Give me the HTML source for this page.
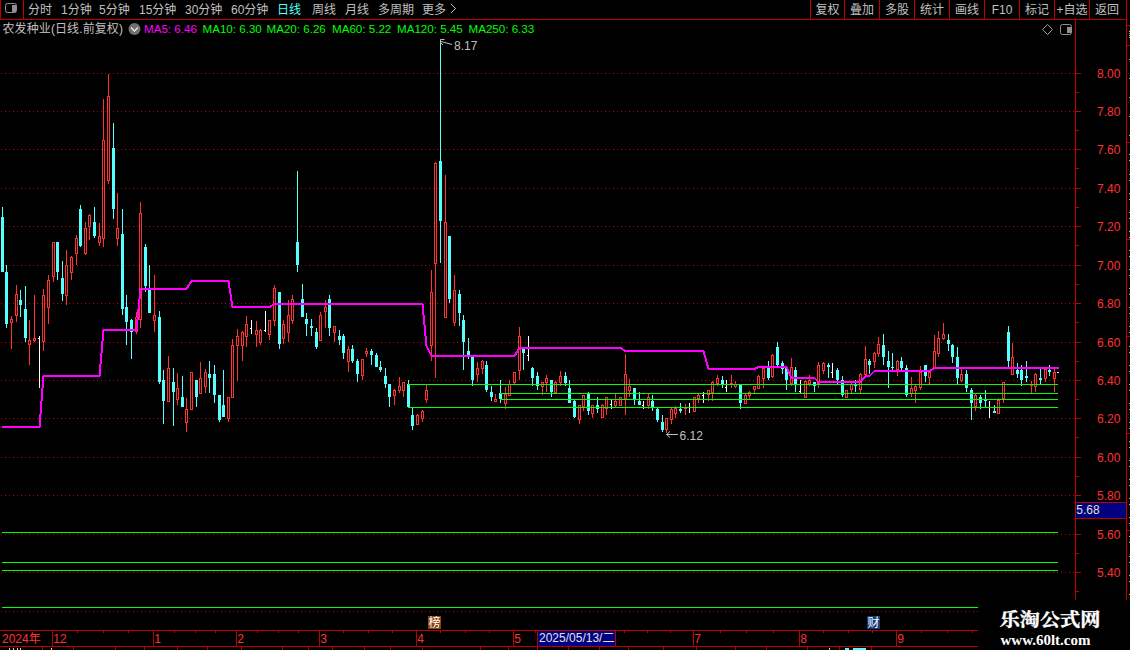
<!DOCTYPE html>
<html lang="zh-CN"><head><meta charset="utf-8"><title>农发种业 日线</title>
<style>
html,body{margin:0;padding:0;background:#000;width:1130px;height:650px;overflow:hidden}
svg{display:block;font-family:'Liberation Sans','Noto Sans CJK SC',sans-serif}
</style></head><body>
<svg width="1130" height="650" viewBox="0 0 1130 650" shape-rendering="crispEdges">
<rect width="1130" height="650" fill="#000"/>
<g id="grid">
<line x1="1" y1="73.5" x2="1074" y2="73.5" stroke="#c80000" stroke-width="1" stroke-dasharray="1 3"/>
<line x1="1" y1="111.5" x2="1074" y2="111.5" stroke="#c80000" stroke-width="1" stroke-dasharray="1 3"/>
<line x1="1" y1="149.5" x2="1074" y2="149.5" stroke="#c80000" stroke-width="1" stroke-dasharray="1 3"/>
<line x1="1" y1="188.5" x2="1074" y2="188.5" stroke="#c80000" stroke-width="1" stroke-dasharray="1 3"/>
<line x1="1" y1="226.5" x2="1074" y2="226.5" stroke="#c80000" stroke-width="1" stroke-dasharray="1 3"/>
<line x1="1" y1="265.5" x2="1074" y2="265.5" stroke="#c80000" stroke-width="1" stroke-dasharray="1 3"/>
<line x1="1" y1="303.5" x2="1074" y2="303.5" stroke="#c80000" stroke-width="1" stroke-dasharray="1 3"/>
<line x1="1" y1="342.5" x2="1074" y2="342.5" stroke="#c80000" stroke-width="1" stroke-dasharray="1 3"/>
<line x1="1" y1="380.5" x2="1074" y2="380.5" stroke="#c80000" stroke-width="1" stroke-dasharray="1 3"/>
<line x1="1" y1="418.5" x2="1074" y2="418.5" stroke="#c80000" stroke-width="1" stroke-dasharray="1 3"/>
<line x1="1" y1="457.5" x2="1074" y2="457.5" stroke="#c80000" stroke-width="1" stroke-dasharray="1 3"/>
<line x1="1" y1="495.5" x2="1074" y2="495.5" stroke="#c80000" stroke-width="1" stroke-dasharray="1 3"/>
<line x1="1" y1="534.5" x2="1074" y2="534.5" stroke="#c80000" stroke-width="1" stroke-dasharray="1 3"/>
<line x1="1" y1="572.5" x2="1074" y2="572.5" stroke="#c80000" stroke-width="1" stroke-dasharray="1 3"/>
<line x1="1" y1="611.5" x2="1074" y2="611.5" stroke="#c80000" stroke-width="1" stroke-dasharray="1 3"/>
</g>
<g id="candles">
<rect x="2" y="207" width="1" height="65" fill="#54ffff"/>
<rect x="1" y="217" width="3" height="55" fill="#54ffff"/>
<rect x="6" y="265" width="1" height="63" fill="#54ffff"/>
<rect x="5" y="272" width="3" height="52" fill="#54ffff"/>
<rect x="11" y="316" width="1" height="3" fill="#ff3232"/>
<rect x="11" y="323" width="1" height="26" fill="#ff3232"/>
<rect x="10" y="319" width="3" height="4" fill="#ff3232"/>
<rect x="11" y="320" width="1" height="2" fill="#000"/>
<rect x="16" y="285" width="1" height="9" fill="#ff3232"/>
<rect x="16" y="316" width="1" height="6" fill="#ff3232"/>
<rect x="15" y="294" width="3" height="22" fill="#ff3232"/>
<rect x="16" y="295" width="1" height="20" fill="#000"/>
<rect x="20" y="290" width="1" height="27" fill="#54ffff"/>
<rect x="19" y="300" width="3" height="5" fill="#54ffff"/>
<rect x="25" y="286" width="1" height="56" fill="#54ffff"/>
<rect x="24" y="309" width="3" height="29" fill="#54ffff"/>
<rect x="29" y="320" width="1" height="20" fill="#ff3232"/>
<rect x="29" y="345" width="1" height="20" fill="#ff3232"/>
<rect x="28" y="340" width="3" height="5" fill="#ff3232"/>
<rect x="29" y="341" width="1" height="3" fill="#000"/>
<rect x="34" y="295" width="1" height="43" fill="#ff3232"/>
<rect x="34" y="341" width="1" height="1" fill="#ff3232"/>
<rect x="33" y="338" width="3" height="3" fill="#ff3232"/>
<rect x="34" y="339" width="1" height="1" fill="#000"/>
<rect x="39" y="336" width="1" height="52" fill="#ffffff"/>
<rect x="38" y="338" width="1" height="1" fill="#ffffff"/>
<rect x="43" y="289" width="1" height="6" fill="#ff3232"/>
<rect x="43" y="342" width="1" height="9" fill="#ff3232"/>
<rect x="42" y="295" width="3" height="47" fill="#ff3232"/>
<rect x="43" y="296" width="1" height="45" fill="#000"/>
<rect x="48" y="275" width="1" height="5" fill="#ff3232"/>
<rect x="48" y="308" width="1" height="16" fill="#ff3232"/>
<rect x="47" y="280" width="3" height="28" fill="#ff3232"/>
<rect x="48" y="281" width="1" height="26" fill="#000"/>
<rect x="53" y="277" width="1" height="5" fill="#ff3232"/>
<rect x="52" y="242" width="3" height="35" fill="#ff3232"/>
<rect x="53" y="243" width="1" height="33" fill="#000"/>
<rect x="57" y="242" width="1" height="38" fill="#54ffff"/>
<rect x="56" y="242" width="3" height="30" fill="#54ffff"/>
<rect x="62" y="261" width="1" height="40" fill="#54ffff"/>
<rect x="61" y="278" width="3" height="16" fill="#54ffff"/>
<rect x="66" y="250" width="1" height="15" fill="#ff3232"/>
<rect x="66" y="296" width="1" height="9" fill="#ff3232"/>
<rect x="65" y="265" width="3" height="31" fill="#ff3232"/>
<rect x="66" y="266" width="1" height="29" fill="#000"/>
<rect x="71" y="256" width="1" height="1" fill="#ff3232"/>
<rect x="71" y="273" width="1" height="7" fill="#ff3232"/>
<rect x="70" y="257" width="3" height="16" fill="#ff3232"/>
<rect x="71" y="258" width="1" height="14" fill="#000"/>
<rect x="76" y="235" width="1" height="3" fill="#ff3232"/>
<rect x="76" y="254" width="1" height="11" fill="#ff3232"/>
<rect x="75" y="238" width="3" height="16" fill="#ff3232"/>
<rect x="76" y="239" width="1" height="14" fill="#000"/>
<rect x="80" y="205" width="1" height="42" fill="#54ffff"/>
<rect x="79" y="209" width="3" height="37" fill="#54ffff"/>
<rect x="85" y="222" width="1" height="6" fill="#ff3232"/>
<rect x="85" y="254" width="1" height="1" fill="#ff3232"/>
<rect x="84" y="228" width="3" height="26" fill="#ff3232"/>
<rect x="85" y="229" width="1" height="24" fill="#000"/>
<rect x="89" y="214" width="1" height="1" fill="#ff3232"/>
<rect x="89" y="227" width="1" height="13" fill="#ff3232"/>
<rect x="88" y="215" width="3" height="12" fill="#ff3232"/>
<rect x="89" y="216" width="1" height="10" fill="#000"/>
<rect x="94" y="207" width="1" height="31" fill="#54ffff"/>
<rect x="93" y="222" width="3" height="14" fill="#54ffff"/>
<rect x="99" y="223" width="1" height="13" fill="#ff3232"/>
<rect x="99" y="243" width="1" height="3" fill="#ff3232"/>
<rect x="98" y="236" width="3" height="7" fill="#ff3232"/>
<rect x="99" y="237" width="1" height="5" fill="#000"/>
<rect x="103" y="99" width="1" height="41" fill="#ff3232"/>
<rect x="103" y="239" width="1" height="8" fill="#ff3232"/>
<rect x="102" y="140" width="3" height="99" fill="#ff3232"/>
<rect x="103" y="141" width="1" height="97" fill="#000"/>
<rect x="108" y="74" width="1" height="22" fill="#ff3232"/>
<rect x="108" y="181" width="1" height="3" fill="#ff3232"/>
<rect x="107" y="96" width="3" height="85" fill="#ff3232"/>
<rect x="108" y="97" width="1" height="83" fill="#000"/>
<rect x="113" y="123" width="1" height="96" fill="#54ffff"/>
<rect x="112" y="148" width="3" height="61" fill="#54ffff"/>
<rect x="117" y="193" width="1" height="35" fill="#ff3232"/>
<rect x="117" y="239" width="1" height="7" fill="#ff3232"/>
<rect x="116" y="228" width="3" height="11" fill="#ff3232"/>
<rect x="117" y="229" width="1" height="9" fill="#000"/>
<rect x="122" y="209" width="1" height="106" fill="#54ffff"/>
<rect x="121" y="234" width="3" height="75" fill="#54ffff"/>
<rect x="126" y="295" width="1" height="50" fill="#54ffff"/>
<rect x="125" y="307" width="3" height="15" fill="#54ffff"/>
<rect x="131" y="319" width="1" height="40" fill="#54ffff"/>
<rect x="130" y="320" width="3" height="12" fill="#54ffff"/>
<rect x="136" y="312" width="1" height="5" fill="#ff3232"/>
<rect x="136" y="332" width="1" height="2" fill="#ff3232"/>
<rect x="135" y="317" width="3" height="15" fill="#ff3232"/>
<rect x="136" y="318" width="1" height="13" fill="#000"/>
<rect x="140" y="202" width="1" height="11" fill="#ff3232"/>
<rect x="140" y="320" width="1" height="8" fill="#ff3232"/>
<rect x="139" y="213" width="3" height="107" fill="#ff3232"/>
<rect x="140" y="214" width="1" height="105" fill="#000"/>
<rect x="145" y="244" width="1" height="48" fill="#54ffff"/>
<rect x="144" y="247" width="3" height="39" fill="#54ffff"/>
<rect x="149" y="265" width="1" height="48" fill="#54ffff"/>
<rect x="148" y="289" width="3" height="24" fill="#54ffff"/>
<rect x="154" y="275" width="1" height="40" fill="#ff3232"/>
<rect x="154" y="321" width="1" height="11" fill="#ff3232"/>
<rect x="153" y="315" width="3" height="6" fill="#ff3232"/>
<rect x="154" y="316" width="1" height="4" fill="#000"/>
<rect x="159" y="311" width="1" height="73" fill="#54ffff"/>
<rect x="158" y="317" width="3" height="65" fill="#54ffff"/>
<rect x="163" y="370" width="1" height="54" fill="#54ffff"/>
<rect x="162" y="380" width="3" height="21" fill="#54ffff"/>
<rect x="168" y="356" width="1" height="12" fill="#ff3232"/>
<rect x="167" y="368" width="3" height="34" fill="#ff3232"/>
<rect x="168" y="369" width="1" height="32" fill="#000"/>
<rect x="173" y="368" width="1" height="58" fill="#54ffff"/>
<rect x="172" y="382" width="3" height="10" fill="#54ffff"/>
<rect x="177" y="373" width="1" height="15" fill="#ff3232"/>
<rect x="177" y="400" width="1" height="5" fill="#ff3232"/>
<rect x="176" y="388" width="3" height="12" fill="#ff3232"/>
<rect x="177" y="389" width="1" height="10" fill="#000"/>
<rect x="182" y="376" width="1" height="31" fill="#54ffff"/>
<rect x="181" y="397" width="3" height="10" fill="#54ffff"/>
<rect x="186" y="398" width="1" height="11" fill="#ff3232"/>
<rect x="186" y="423" width="1" height="9" fill="#ff3232"/>
<rect x="185" y="409" width="3" height="14" fill="#ff3232"/>
<rect x="186" y="410" width="1" height="12" fill="#000"/>
<rect x="190" y="372" width="3" height="38" fill="#ff3232"/>
<rect x="191" y="373" width="1" height="36" fill="#000"/>
<rect x="196" y="380" width="1" height="27" fill="#54ffff"/>
<rect x="195" y="380" width="3" height="17" fill="#54ffff"/>
<rect x="200" y="362" width="1" height="16" fill="#ff3232"/>
<rect x="199" y="378" width="3" height="16" fill="#ff3232"/>
<rect x="200" y="379" width="1" height="14" fill="#000"/>
<rect x="205" y="369" width="1" height="3" fill="#ff3232"/>
<rect x="205" y="387" width="1" height="6" fill="#ff3232"/>
<rect x="204" y="372" width="3" height="15" fill="#ff3232"/>
<rect x="205" y="373" width="1" height="13" fill="#000"/>
<rect x="209" y="361" width="1" height="32" fill="#54ffff"/>
<rect x="208" y="374" width="3" height="4" fill="#54ffff"/>
<rect x="214" y="365" width="1" height="38" fill="#54ffff"/>
<rect x="213" y="374" width="3" height="21" fill="#54ffff"/>
<rect x="219" y="395" width="1" height="27" fill="#54ffff"/>
<rect x="218" y="395" width="3" height="25" fill="#54ffff"/>
<rect x="223" y="370" width="1" height="47" fill="#54ffff"/>
<rect x="222" y="405" width="3" height="12" fill="#54ffff"/>
<rect x="228" y="419" width="1" height="3" fill="#ff3232"/>
<rect x="227" y="397" width="3" height="22" fill="#ff3232"/>
<rect x="228" y="398" width="1" height="20" fill="#000"/>
<rect x="232" y="339" width="1" height="6" fill="#ff3232"/>
<rect x="231" y="345" width="3" height="53" fill="#ff3232"/>
<rect x="232" y="346" width="1" height="51" fill="#000"/>
<rect x="237" y="329" width="1" height="7" fill="#ff3232"/>
<rect x="237" y="346" width="1" height="35" fill="#ff3232"/>
<rect x="236" y="336" width="3" height="10" fill="#ff3232"/>
<rect x="237" y="337" width="1" height="8" fill="#000"/>
<rect x="242" y="331" width="1" height="1" fill="#ff3232"/>
<rect x="242" y="346" width="1" height="15" fill="#ff3232"/>
<rect x="241" y="332" width="3" height="14" fill="#ff3232"/>
<rect x="242" y="333" width="1" height="12" fill="#000"/>
<rect x="246" y="316" width="1" height="8" fill="#ff3232"/>
<rect x="246" y="337" width="1" height="10" fill="#ff3232"/>
<rect x="245" y="324" width="3" height="13" fill="#ff3232"/>
<rect x="246" y="325" width="1" height="11" fill="#000"/>
<rect x="251" y="320" width="1" height="14" fill="#ffffff"/>
<rect x="250" y="328" width="1" height="1" fill="#ffffff"/>
<rect x="256" y="321" width="1" height="9" fill="#ff3232"/>
<rect x="256" y="335" width="1" height="12" fill="#ff3232"/>
<rect x="255" y="330" width="3" height="5" fill="#ff3232"/>
<rect x="256" y="331" width="1" height="3" fill="#000"/>
<rect x="260" y="329" width="1" height="1" fill="#ff3232"/>
<rect x="260" y="343" width="1" height="2" fill="#ff3232"/>
<rect x="259" y="330" width="3" height="13" fill="#ff3232"/>
<rect x="260" y="331" width="1" height="11" fill="#000"/>
<rect x="265" y="311" width="1" height="21" fill="#ffffff"/>
<rect x="264" y="330" width="1" height="1" fill="#ffffff"/>
<rect x="269" y="335" width="1" height="5" fill="#ff3232"/>
<rect x="268" y="320" width="3" height="15" fill="#ff3232"/>
<rect x="269" y="321" width="1" height="13" fill="#000"/>
<rect x="274" y="285" width="1" height="3" fill="#ff3232"/>
<rect x="274" y="321" width="1" height="5" fill="#ff3232"/>
<rect x="273" y="288" width="3" height="33" fill="#ff3232"/>
<rect x="274" y="289" width="1" height="31" fill="#000"/>
<rect x="279" y="292" width="1" height="57" fill="#54ffff"/>
<rect x="278" y="292" width="3" height="52" fill="#54ffff"/>
<rect x="283" y="320" width="1" height="4" fill="#ff3232"/>
<rect x="283" y="339" width="1" height="5" fill="#ff3232"/>
<rect x="282" y="324" width="3" height="15" fill="#ff3232"/>
<rect x="283" y="325" width="1" height="13" fill="#000"/>
<rect x="288" y="300" width="1" height="15" fill="#ff3232"/>
<rect x="288" y="333" width="1" height="9" fill="#ff3232"/>
<rect x="287" y="315" width="3" height="18" fill="#ff3232"/>
<rect x="288" y="316" width="1" height="16" fill="#000"/>
<rect x="292" y="295" width="1" height="4" fill="#ff3232"/>
<rect x="292" y="321" width="1" height="3" fill="#ff3232"/>
<rect x="291" y="299" width="3" height="22" fill="#ff3232"/>
<rect x="292" y="300" width="1" height="20" fill="#000"/>
<rect x="297" y="171" width="1" height="101" fill="#54ffff"/>
<rect x="296" y="242" width="3" height="23" fill="#54ffff"/>
<rect x="302" y="284" width="1" height="33" fill="#54ffff"/>
<rect x="301" y="299" width="3" height="18" fill="#54ffff"/>
<rect x="306" y="313" width="1" height="23" fill="#54ffff"/>
<rect x="305" y="319" width="3" height="5" fill="#54ffff"/>
<rect x="311" y="319" width="1" height="17" fill="#54ffff"/>
<rect x="310" y="326" width="3" height="2" fill="#54ffff"/>
<rect x="316" y="328" width="1" height="21" fill="#54ffff"/>
<rect x="315" y="332" width="3" height="15" fill="#54ffff"/>
<rect x="320" y="312" width="1" height="3" fill="#ff3232"/>
<rect x="319" y="315" width="3" height="26" fill="#ff3232"/>
<rect x="320" y="316" width="1" height="24" fill="#000"/>
<rect x="325" y="300" width="1" height="7" fill="#ff3232"/>
<rect x="325" y="312" width="1" height="16" fill="#ff3232"/>
<rect x="324" y="307" width="3" height="5" fill="#ff3232"/>
<rect x="325" y="308" width="1" height="3" fill="#000"/>
<rect x="329" y="295" width="1" height="41" fill="#54ffff"/>
<rect x="328" y="299" width="3" height="29" fill="#54ffff"/>
<rect x="334" y="333" width="1" height="9" fill="#ff3232"/>
<rect x="333" y="326" width="3" height="7" fill="#ff3232"/>
<rect x="334" y="327" width="1" height="5" fill="#000"/>
<rect x="339" y="330" width="1" height="15" fill="#54ffff"/>
<rect x="338" y="336" width="3" height="4" fill="#54ffff"/>
<rect x="343" y="334" width="1" height="25" fill="#54ffff"/>
<rect x="342" y="336" width="3" height="17" fill="#54ffff"/>
<rect x="348" y="346" width="1" height="3" fill="#ff3232"/>
<rect x="348" y="362" width="1" height="10" fill="#ff3232"/>
<rect x="347" y="349" width="3" height="13" fill="#ff3232"/>
<rect x="348" y="350" width="1" height="11" fill="#000"/>
<rect x="352" y="345" width="1" height="18" fill="#54ffff"/>
<rect x="351" y="349" width="3" height="12" fill="#54ffff"/>
<rect x="357" y="359" width="1" height="23" fill="#54ffff"/>
<rect x="356" y="361" width="3" height="13" fill="#54ffff"/>
<rect x="362" y="376" width="1" height="4" fill="#ff3232"/>
<rect x="361" y="359" width="3" height="17" fill="#ff3232"/>
<rect x="362" y="360" width="1" height="15" fill="#000"/>
<rect x="366" y="348" width="1" height="3" fill="#ff3232"/>
<rect x="366" y="354" width="1" height="3" fill="#ff3232"/>
<rect x="365" y="351" width="3" height="3" fill="#ff3232"/>
<rect x="366" y="352" width="1" height="1" fill="#000"/>
<rect x="371" y="349" width="1" height="16" fill="#54ffff"/>
<rect x="370" y="351" width="3" height="4" fill="#54ffff"/>
<rect x="376" y="353" width="1" height="14" fill="#54ffff"/>
<rect x="375" y="355" width="3" height="12" fill="#54ffff"/>
<rect x="380" y="361" width="1" height="11" fill="#54ffff"/>
<rect x="379" y="367" width="3" height="3" fill="#54ffff"/>
<rect x="385" y="368" width="1" height="20" fill="#54ffff"/>
<rect x="384" y="376" width="3" height="8" fill="#54ffff"/>
<rect x="389" y="384" width="1" height="23" fill="#54ffff"/>
<rect x="388" y="384" width="3" height="13" fill="#54ffff"/>
<rect x="394" y="389" width="1" height="1" fill="#ff3232"/>
<rect x="394" y="396" width="1" height="9" fill="#ff3232"/>
<rect x="393" y="390" width="3" height="6" fill="#ff3232"/>
<rect x="394" y="391" width="1" height="4" fill="#000"/>
<rect x="399" y="377" width="1" height="9" fill="#ff3232"/>
<rect x="399" y="391" width="1" height="2" fill="#ff3232"/>
<rect x="398" y="386" width="3" height="5" fill="#ff3232"/>
<rect x="399" y="387" width="1" height="3" fill="#000"/>
<rect x="403" y="391" width="1" height="6" fill="#ff3232"/>
<rect x="402" y="382" width="3" height="9" fill="#ff3232"/>
<rect x="403" y="383" width="1" height="7" fill="#000"/>
<rect x="408" y="380" width="1" height="27" fill="#54ffff"/>
<rect x="407" y="384" width="3" height="23" fill="#54ffff"/>
<rect x="412" y="408" width="1" height="22" fill="#54ffff"/>
<rect x="411" y="415" width="3" height="11" fill="#54ffff"/>
<rect x="417" y="414" width="1" height="1" fill="#ff3232"/>
<rect x="416" y="415" width="3" height="10" fill="#ff3232"/>
<rect x="417" y="416" width="1" height="8" fill="#000"/>
<rect x="422" y="410" width="1" height="1" fill="#ff3232"/>
<rect x="422" y="419" width="1" height="3" fill="#ff3232"/>
<rect x="421" y="411" width="3" height="8" fill="#ff3232"/>
<rect x="422" y="412" width="1" height="6" fill="#000"/>
<rect x="426" y="385" width="1" height="5" fill="#ff3232"/>
<rect x="426" y="400" width="1" height="3" fill="#ff3232"/>
<rect x="425" y="390" width="3" height="10" fill="#ff3232"/>
<rect x="426" y="391" width="1" height="8" fill="#000"/>
<rect x="431" y="270" width="1" height="22" fill="#ff3232"/>
<rect x="431" y="346" width="1" height="15" fill="#ff3232"/>
<rect x="430" y="292" width="3" height="54" fill="#ff3232"/>
<rect x="431" y="293" width="1" height="52" fill="#000"/>
<rect x="435" y="162" width="1" height="1" fill="#ff3232"/>
<rect x="435" y="264" width="1" height="114" fill="#ff3232"/>
<rect x="434" y="163" width="3" height="101" fill="#ff3232"/>
<rect x="435" y="164" width="1" height="99" fill="#000"/>
<rect x="440" y="43" width="1" height="220" fill="#54ffff"/>
<rect x="439" y="161" width="3" height="60" fill="#54ffff"/>
<rect x="445" y="175" width="1" height="47" fill="#ff3232"/>
<rect x="444" y="222" width="3" height="96" fill="#ff3232"/>
<rect x="445" y="223" width="1" height="94" fill="#000"/>
<rect x="449" y="236" width="1" height="67" fill="#54ffff"/>
<rect x="448" y="236" width="3" height="63" fill="#54ffff"/>
<rect x="454" y="275" width="1" height="15" fill="#ff3232"/>
<rect x="454" y="323" width="1" height="3" fill="#ff3232"/>
<rect x="453" y="290" width="3" height="33" fill="#ff3232"/>
<rect x="454" y="291" width="1" height="31" fill="#000"/>
<rect x="459" y="290" width="1" height="36" fill="#54ffff"/>
<rect x="458" y="294" width="3" height="19" fill="#54ffff"/>
<rect x="463" y="315" width="1" height="55" fill="#54ffff"/>
<rect x="462" y="320" width="3" height="22" fill="#54ffff"/>
<rect x="468" y="338" width="1" height="21" fill="#54ffff"/>
<rect x="467" y="351" width="3" height="4" fill="#54ffff"/>
<rect x="472" y="356" width="1" height="30" fill="#54ffff"/>
<rect x="471" y="356" width="3" height="24" fill="#54ffff"/>
<rect x="477" y="362" width="1" height="6" fill="#ff3232"/>
<rect x="477" y="375" width="1" height="7" fill="#ff3232"/>
<rect x="476" y="368" width="3" height="7" fill="#ff3232"/>
<rect x="477" y="369" width="1" height="5" fill="#000"/>
<rect x="482" y="360" width="1" height="1" fill="#ff3232"/>
<rect x="482" y="369" width="1" height="5" fill="#ff3232"/>
<rect x="481" y="361" width="3" height="8" fill="#ff3232"/>
<rect x="482" y="362" width="1" height="6" fill="#000"/>
<rect x="486" y="361" width="1" height="31" fill="#54ffff"/>
<rect x="485" y="365" width="3" height="25" fill="#54ffff"/>
<rect x="491" y="386" width="1" height="15" fill="#54ffff"/>
<rect x="490" y="392" width="3" height="5" fill="#54ffff"/>
<rect x="495" y="394" width="1" height="5" fill="#ff3232"/>
<rect x="494" y="399" width="3" height="3" fill="#ff3232"/>
<rect x="495" y="400" width="1" height="1" fill="#000"/>
<rect x="500" y="380" width="1" height="23" fill="#54ffff"/>
<rect x="499" y="393" width="3" height="6" fill="#54ffff"/>
<rect x="505" y="387" width="1" height="7" fill="#ff3232"/>
<rect x="505" y="404" width="1" height="5" fill="#ff3232"/>
<rect x="504" y="394" width="3" height="10" fill="#ff3232"/>
<rect x="505" y="395" width="1" height="8" fill="#000"/>
<rect x="509" y="380" width="1" height="4" fill="#ff3232"/>
<rect x="508" y="384" width="3" height="12" fill="#ff3232"/>
<rect x="509" y="385" width="1" height="10" fill="#000"/>
<rect x="514" y="383" width="1" height="1" fill="#ff3232"/>
<rect x="513" y="372" width="3" height="11" fill="#ff3232"/>
<rect x="514" y="373" width="1" height="9" fill="#000"/>
<rect x="519" y="327" width="1" height="9" fill="#ff3232"/>
<rect x="519" y="371" width="1" height="9" fill="#ff3232"/>
<rect x="518" y="336" width="3" height="35" fill="#ff3232"/>
<rect x="519" y="337" width="1" height="33" fill="#000"/>
<rect x="523" y="349" width="1" height="21" fill="#54ffff"/>
<rect x="522" y="349" width="3" height="4" fill="#54ffff"/>
<rect x="528" y="336" width="1" height="25" fill="#ffffff"/>
<rect x="527" y="355" width="1" height="1" fill="#ffffff"/>
<rect x="532" y="367" width="1" height="19" fill="#54ffff"/>
<rect x="531" y="368" width="3" height="10" fill="#54ffff"/>
<rect x="537" y="372" width="1" height="18" fill="#54ffff"/>
<rect x="536" y="376" width="3" height="10" fill="#54ffff"/>
<rect x="542" y="387" width="1" height="8" fill="#ff3232"/>
<rect x="541" y="382" width="3" height="5" fill="#ff3232"/>
<rect x="542" y="383" width="1" height="3" fill="#000"/>
<rect x="546" y="375" width="1" height="3" fill="#ff3232"/>
<rect x="546" y="383" width="1" height="9" fill="#ff3232"/>
<rect x="545" y="378" width="3" height="5" fill="#ff3232"/>
<rect x="546" y="379" width="1" height="3" fill="#000"/>
<rect x="551" y="380" width="1" height="17" fill="#54ffff"/>
<rect x="550" y="380" width="3" height="12" fill="#54ffff"/>
<rect x="555" y="381" width="1" height="1" fill="#ff3232"/>
<rect x="554" y="382" width="3" height="11" fill="#ff3232"/>
<rect x="555" y="383" width="1" height="9" fill="#000"/>
<rect x="560" y="371" width="1" height="5" fill="#ff3232"/>
<rect x="560" y="383" width="1" height="3" fill="#ff3232"/>
<rect x="559" y="376" width="3" height="7" fill="#ff3232"/>
<rect x="560" y="377" width="1" height="5" fill="#000"/>
<rect x="565" y="372" width="1" height="14" fill="#54ffff"/>
<rect x="564" y="376" width="3" height="7" fill="#54ffff"/>
<rect x="569" y="380" width="1" height="23" fill="#54ffff"/>
<rect x="568" y="388" width="3" height="15" fill="#54ffff"/>
<rect x="574" y="400" width="1" height="18" fill="#54ffff"/>
<rect x="573" y="401" width="3" height="16" fill="#54ffff"/>
<rect x="579" y="420" width="1" height="4" fill="#ff3232"/>
<rect x="578" y="405" width="3" height="15" fill="#ff3232"/>
<rect x="579" y="406" width="1" height="13" fill="#000"/>
<rect x="583" y="407" width="1" height="4" fill="#ff3232"/>
<rect x="582" y="395" width="3" height="12" fill="#ff3232"/>
<rect x="583" y="396" width="1" height="10" fill="#000"/>
<rect x="588" y="392" width="1" height="23" fill="#54ffff"/>
<rect x="587" y="393" width="3" height="18" fill="#54ffff"/>
<rect x="592" y="414" width="1" height="4" fill="#ff3232"/>
<rect x="591" y="405" width="3" height="9" fill="#ff3232"/>
<rect x="592" y="406" width="1" height="7" fill="#000"/>
<rect x="597" y="397" width="1" height="16" fill="#54ffff"/>
<rect x="596" y="405" width="3" height="4" fill="#54ffff"/>
<rect x="602" y="404" width="1" height="1" fill="#ff3232"/>
<rect x="601" y="405" width="3" height="13" fill="#ff3232"/>
<rect x="602" y="406" width="1" height="11" fill="#000"/>
<rect x="606" y="409" width="1" height="6" fill="#ff3232"/>
<rect x="605" y="397" width="3" height="12" fill="#ff3232"/>
<rect x="606" y="398" width="1" height="10" fill="#000"/>
<rect x="611" y="400" width="1" height="9" fill="#ffffff"/>
<rect x="610" y="404" width="1" height="1" fill="#ffffff"/>
<rect x="615" y="394" width="1" height="7" fill="#ff3232"/>
<rect x="615" y="406" width="1" height="1" fill="#ff3232"/>
<rect x="614" y="401" width="3" height="5" fill="#ff3232"/>
<rect x="615" y="402" width="1" height="3" fill="#000"/>
<rect x="619" y="397" width="3" height="9" fill="#ff3232"/>
<rect x="620" y="398" width="1" height="7" fill="#000"/>
<rect x="625" y="354" width="1" height="20" fill="#ff3232"/>
<rect x="625" y="399" width="1" height="16" fill="#ff3232"/>
<rect x="624" y="374" width="3" height="25" fill="#ff3232"/>
<rect x="625" y="375" width="1" height="23" fill="#000"/>
<rect x="629" y="379" width="1" height="7" fill="#ff3232"/>
<rect x="629" y="391" width="1" height="6" fill="#ff3232"/>
<rect x="628" y="386" width="3" height="5" fill="#ff3232"/>
<rect x="629" y="387" width="1" height="3" fill="#000"/>
<rect x="634" y="388" width="1" height="17" fill="#54ffff"/>
<rect x="633" y="388" width="3" height="11" fill="#54ffff"/>
<rect x="639" y="392" width="1" height="13" fill="#54ffff"/>
<rect x="638" y="401" width="3" height="4" fill="#54ffff"/>
<rect x="643" y="401" width="1" height="8" fill="#ffffff"/>
<rect x="642" y="405" width="1" height="1" fill="#ffffff"/>
<rect x="648" y="394" width="1" height="3" fill="#ff3232"/>
<rect x="648" y="406" width="1" height="3" fill="#ff3232"/>
<rect x="647" y="397" width="3" height="9" fill="#ff3232"/>
<rect x="648" y="398" width="1" height="7" fill="#000"/>
<rect x="652" y="395" width="1" height="16" fill="#54ffff"/>
<rect x="651" y="401" width="3" height="7" fill="#54ffff"/>
<rect x="657" y="408" width="1" height="14" fill="#54ffff"/>
<rect x="656" y="409" width="3" height="11" fill="#54ffff"/>
<rect x="662" y="415" width="1" height="17" fill="#54ffff"/>
<rect x="661" y="422" width="3" height="8" fill="#54ffff"/>
<rect x="666" y="430" width="1" height="3" fill="#ff3232"/>
<rect x="665" y="418" width="3" height="12" fill="#ff3232"/>
<rect x="666" y="419" width="1" height="10" fill="#000"/>
<rect x="671" y="408" width="1" height="1" fill="#ff3232"/>
<rect x="671" y="420" width="1" height="4" fill="#ff3232"/>
<rect x="670" y="409" width="3" height="11" fill="#ff3232"/>
<rect x="671" y="410" width="1" height="9" fill="#000"/>
<rect x="675" y="406" width="1" height="2" fill="#ff3232"/>
<rect x="675" y="414" width="1" height="4" fill="#ff3232"/>
<rect x="674" y="408" width="3" height="6" fill="#ff3232"/>
<rect x="675" y="409" width="1" height="4" fill="#000"/>
<rect x="680" y="403" width="1" height="10" fill="#54ffff"/>
<rect x="679" y="409" width="3" height="2" fill="#54ffff"/>
<rect x="685" y="404" width="1" height="4" fill="#ff3232"/>
<rect x="685" y="409" width="1" height="6" fill="#ff3232"/>
<rect x="684" y="408" width="3" height="1" fill="#ff3232"/>
<rect x="689" y="403" width="1" height="10" fill="#ffffff"/>
<rect x="688" y="407" width="1" height="1" fill="#ffffff"/>
<rect x="693" y="397" width="3" height="15" fill="#ff3232"/>
<rect x="694" y="398" width="1" height="13" fill="#000"/>
<rect x="698" y="394" width="1" height="1" fill="#ff3232"/>
<rect x="698" y="399" width="1" height="4" fill="#ff3232"/>
<rect x="697" y="395" width="3" height="4" fill="#ff3232"/>
<rect x="698" y="396" width="1" height="2" fill="#000"/>
<rect x="703" y="392" width="1" height="11" fill="#ffffff"/>
<rect x="702" y="395" width="1" height="1" fill="#ffffff"/>
<rect x="708" y="395" width="1" height="6" fill="#ff3232"/>
<rect x="707" y="390" width="3" height="5" fill="#ff3232"/>
<rect x="708" y="391" width="1" height="3" fill="#000"/>
<rect x="712" y="381" width="1" height="1" fill="#ff3232"/>
<rect x="712" y="393" width="1" height="8" fill="#ff3232"/>
<rect x="711" y="382" width="3" height="11" fill="#ff3232"/>
<rect x="712" y="383" width="1" height="9" fill="#000"/>
<rect x="717" y="375" width="1" height="3" fill="#ff3232"/>
<rect x="717" y="384" width="1" height="2" fill="#ff3232"/>
<rect x="716" y="378" width="3" height="6" fill="#ff3232"/>
<rect x="717" y="379" width="1" height="4" fill="#000"/>
<rect x="722" y="376" width="1" height="12" fill="#54ffff"/>
<rect x="721" y="380" width="3" height="5" fill="#54ffff"/>
<rect x="726" y="380" width="1" height="12" fill="#ffffff"/>
<rect x="725" y="387" width="1" height="1" fill="#ffffff"/>
<rect x="731" y="375" width="1" height="8" fill="#ff3232"/>
<rect x="731" y="384" width="1" height="4" fill="#ff3232"/>
<rect x="730" y="383" width="3" height="1" fill="#ff3232"/>
<rect x="735" y="381" width="1" height="3" fill="#ff3232"/>
<rect x="735" y="387" width="1" height="1" fill="#ff3232"/>
<rect x="734" y="384" width="3" height="3" fill="#ff3232"/>
<rect x="735" y="385" width="1" height="1" fill="#000"/>
<rect x="740" y="385" width="1" height="24" fill="#54ffff"/>
<rect x="739" y="385" width="3" height="18" fill="#54ffff"/>
<rect x="745" y="394" width="1" height="1" fill="#ff3232"/>
<rect x="744" y="395" width="3" height="9" fill="#ff3232"/>
<rect x="745" y="396" width="1" height="7" fill="#000"/>
<rect x="749" y="391" width="1" height="1" fill="#ff3232"/>
<rect x="749" y="396" width="1" height="3" fill="#ff3232"/>
<rect x="748" y="392" width="3" height="4" fill="#ff3232"/>
<rect x="749" y="393" width="1" height="2" fill="#000"/>
<rect x="754" y="390" width="1" height="3" fill="#ff3232"/>
<rect x="753" y="386" width="3" height="4" fill="#ff3232"/>
<rect x="754" y="387" width="1" height="2" fill="#000"/>
<rect x="758" y="375" width="1" height="1" fill="#ff3232"/>
<rect x="757" y="376" width="3" height="13" fill="#ff3232"/>
<rect x="758" y="377" width="1" height="11" fill="#000"/>
<rect x="763" y="379" width="1" height="9" fill="#ff3232"/>
<rect x="762" y="368" width="3" height="11" fill="#ff3232"/>
<rect x="763" y="369" width="1" height="9" fill="#000"/>
<rect x="768" y="361" width="1" height="19" fill="#54ffff"/>
<rect x="767" y="368" width="3" height="10" fill="#54ffff"/>
<rect x="772" y="354" width="1" height="1" fill="#ff3232"/>
<rect x="772" y="377" width="1" height="1" fill="#ff3232"/>
<rect x="771" y="355" width="3" height="22" fill="#ff3232"/>
<rect x="772" y="356" width="1" height="20" fill="#000"/>
<rect x="777" y="342" width="1" height="24" fill="#54ffff"/>
<rect x="776" y="347" width="3" height="18" fill="#54ffff"/>
<rect x="782" y="361" width="1" height="13" fill="#54ffff"/>
<rect x="781" y="363" width="3" height="6" fill="#54ffff"/>
<rect x="786" y="368" width="1" height="22" fill="#54ffff"/>
<rect x="785" y="368" width="3" height="12" fill="#54ffff"/>
<rect x="791" y="358" width="1" height="9" fill="#ff3232"/>
<rect x="791" y="384" width="1" height="2" fill="#ff3232"/>
<rect x="790" y="367" width="3" height="17" fill="#ff3232"/>
<rect x="791" y="368" width="1" height="15" fill="#000"/>
<rect x="795" y="367" width="1" height="25" fill="#54ffff"/>
<rect x="794" y="370" width="3" height="14" fill="#54ffff"/>
<rect x="800" y="380" width="1" height="13" fill="#ffffff"/>
<rect x="799" y="391" width="1" height="1" fill="#ffffff"/>
<rect x="805" y="380" width="1" height="1" fill="#ff3232"/>
<rect x="804" y="381" width="3" height="17" fill="#ff3232"/>
<rect x="805" y="382" width="1" height="15" fill="#000"/>
<rect x="809" y="375" width="1" height="5" fill="#ff3232"/>
<rect x="809" y="384" width="1" height="2" fill="#ff3232"/>
<rect x="808" y="380" width="3" height="4" fill="#ff3232"/>
<rect x="809" y="381" width="1" height="2" fill="#000"/>
<rect x="814" y="382" width="1" height="10" fill="#54ffff"/>
<rect x="813" y="382" width="3" height="4" fill="#54ffff"/>
<rect x="818" y="362" width="1" height="3" fill="#ff3232"/>
<rect x="818" y="384" width="1" height="4" fill="#ff3232"/>
<rect x="817" y="365" width="3" height="19" fill="#ff3232"/>
<rect x="818" y="366" width="1" height="17" fill="#000"/>
<rect x="823" y="362" width="1" height="1" fill="#ff3232"/>
<rect x="823" y="371" width="1" height="3" fill="#ff3232"/>
<rect x="822" y="363" width="3" height="8" fill="#ff3232"/>
<rect x="823" y="364" width="1" height="6" fill="#000"/>
<rect x="828" y="363" width="1" height="15" fill="#54ffff"/>
<rect x="827" y="365" width="3" height="2" fill="#54ffff"/>
<rect x="832" y="363" width="1" height="15" fill="#ffffff"/>
<rect x="831" y="372" width="1" height="1" fill="#ffffff"/>
<rect x="837" y="368" width="1" height="16" fill="#54ffff"/>
<rect x="836" y="370" width="3" height="10" fill="#54ffff"/>
<rect x="842" y="376" width="1" height="21" fill="#54ffff"/>
<rect x="841" y="380" width="3" height="15" fill="#54ffff"/>
<rect x="845" y="390" width="3" height="8" fill="#ff3232"/>
<rect x="846" y="391" width="1" height="6" fill="#000"/>
<rect x="851" y="382" width="1" height="2" fill="#ff3232"/>
<rect x="851" y="390" width="1" height="3" fill="#ff3232"/>
<rect x="850" y="384" width="3" height="6" fill="#ff3232"/>
<rect x="851" y="385" width="1" height="4" fill="#000"/>
<rect x="855" y="380" width="1" height="12" fill="#54ffff"/>
<rect x="854" y="385" width="3" height="1" fill="#54ffff"/>
<rect x="860" y="373" width="1" height="1" fill="#ff3232"/>
<rect x="860" y="390" width="1" height="3" fill="#ff3232"/>
<rect x="859" y="374" width="3" height="16" fill="#ff3232"/>
<rect x="860" y="375" width="1" height="14" fill="#000"/>
<rect x="865" y="346" width="1" height="13" fill="#ff3232"/>
<rect x="864" y="359" width="3" height="16" fill="#ff3232"/>
<rect x="865" y="360" width="1" height="14" fill="#000"/>
<rect x="869" y="359" width="1" height="15" fill="#54ffff"/>
<rect x="868" y="361" width="3" height="4" fill="#54ffff"/>
<rect x="874" y="352" width="1" height="1" fill="#ff3232"/>
<rect x="874" y="362" width="1" height="6" fill="#ff3232"/>
<rect x="873" y="353" width="3" height="9" fill="#ff3232"/>
<rect x="874" y="354" width="1" height="7" fill="#000"/>
<rect x="878" y="337" width="1" height="7" fill="#ff3232"/>
<rect x="878" y="354" width="1" height="3" fill="#ff3232"/>
<rect x="877" y="344" width="3" height="10" fill="#ff3232"/>
<rect x="878" y="345" width="1" height="8" fill="#000"/>
<rect x="883" y="334" width="1" height="31" fill="#54ffff"/>
<rect x="882" y="345" width="3" height="12" fill="#54ffff"/>
<rect x="888" y="351" width="1" height="37" fill="#54ffff"/>
<rect x="887" y="361" width="3" height="6" fill="#54ffff"/>
<rect x="892" y="353" width="1" height="17" fill="#54ffff"/>
<rect x="891" y="367" width="3" height="1" fill="#54ffff"/>
<rect x="897" y="360" width="1" height="1" fill="#ff3232"/>
<rect x="897" y="370" width="1" height="6" fill="#ff3232"/>
<rect x="896" y="361" width="3" height="9" fill="#ff3232"/>
<rect x="897" y="362" width="1" height="7" fill="#000"/>
<rect x="901" y="357" width="1" height="13" fill="#54ffff"/>
<rect x="900" y="361" width="3" height="7" fill="#54ffff"/>
<rect x="906" y="365" width="1" height="32" fill="#54ffff"/>
<rect x="905" y="368" width="3" height="27" fill="#54ffff"/>
<rect x="911" y="377" width="1" height="11" fill="#ff3232"/>
<rect x="911" y="394" width="1" height="3" fill="#ff3232"/>
<rect x="910" y="388" width="3" height="6" fill="#ff3232"/>
<rect x="911" y="389" width="1" height="4" fill="#000"/>
<rect x="915" y="385" width="1" height="1" fill="#ff3232"/>
<rect x="915" y="391" width="1" height="12" fill="#ff3232"/>
<rect x="914" y="386" width="3" height="5" fill="#ff3232"/>
<rect x="915" y="387" width="1" height="3" fill="#000"/>
<rect x="920" y="366" width="1" height="6" fill="#ff3232"/>
<rect x="920" y="388" width="1" height="2" fill="#ff3232"/>
<rect x="919" y="372" width="3" height="16" fill="#ff3232"/>
<rect x="920" y="373" width="1" height="14" fill="#000"/>
<rect x="925" y="365" width="1" height="17" fill="#54ffff"/>
<rect x="924" y="365" width="3" height="11" fill="#54ffff"/>
<rect x="929" y="378" width="1" height="6" fill="#ff3232"/>
<rect x="928" y="372" width="3" height="6" fill="#ff3232"/>
<rect x="929" y="373" width="1" height="4" fill="#000"/>
<rect x="934" y="335" width="1" height="16" fill="#ff3232"/>
<rect x="933" y="351" width="3" height="17" fill="#ff3232"/>
<rect x="934" y="352" width="1" height="15" fill="#000"/>
<rect x="938" y="331" width="1" height="7" fill="#ff3232"/>
<rect x="938" y="354" width="1" height="3" fill="#ff3232"/>
<rect x="937" y="338" width="3" height="16" fill="#ff3232"/>
<rect x="938" y="339" width="1" height="14" fill="#000"/>
<rect x="943" y="323" width="1" height="11" fill="#ff3232"/>
<rect x="943" y="339" width="1" height="1" fill="#ff3232"/>
<rect x="942" y="334" width="3" height="5" fill="#ff3232"/>
<rect x="943" y="335" width="1" height="3" fill="#000"/>
<rect x="948" y="334" width="1" height="17" fill="#54ffff"/>
<rect x="947" y="340" width="3" height="4" fill="#54ffff"/>
<rect x="952" y="344" width="1" height="19" fill="#54ffff"/>
<rect x="951" y="345" width="3" height="12" fill="#54ffff"/>
<rect x="957" y="347" width="1" height="37" fill="#54ffff"/>
<rect x="956" y="357" width="3" height="21" fill="#54ffff"/>
<rect x="961" y="369" width="1" height="5" fill="#ff3232"/>
<rect x="961" y="381" width="1" height="1" fill="#ff3232"/>
<rect x="960" y="374" width="3" height="7" fill="#ff3232"/>
<rect x="961" y="375" width="1" height="5" fill="#000"/>
<rect x="966" y="370" width="1" height="22" fill="#54ffff"/>
<rect x="965" y="374" width="3" height="14" fill="#54ffff"/>
<rect x="971" y="388" width="1" height="32" fill="#54ffff"/>
<rect x="970" y="390" width="3" height="13" fill="#54ffff"/>
<rect x="975" y="394" width="1" height="1" fill="#ff3232"/>
<rect x="975" y="407" width="1" height="4" fill="#ff3232"/>
<rect x="974" y="395" width="3" height="12" fill="#ff3232"/>
<rect x="975" y="396" width="1" height="10" fill="#000"/>
<rect x="980" y="395" width="1" height="14" fill="#54ffff"/>
<rect x="979" y="397" width="3" height="6" fill="#54ffff"/>
<rect x="985" y="390" width="1" height="17" fill="#54ffff"/>
<rect x="984" y="400" width="3" height="1" fill="#54ffff"/>
<rect x="989" y="401" width="1" height="17" fill="#ffffff"/>
<rect x="988" y="407" width="1" height="1" fill="#ffffff"/>
<rect x="994" y="405" width="1" height="8" fill="#54ffff"/>
<rect x="993" y="411" width="3" height="2" fill="#54ffff"/>
<rect x="998" y="398" width="1" height="2" fill="#ff3232"/>
<rect x="997" y="400" width="3" height="14" fill="#ff3232"/>
<rect x="998" y="401" width="1" height="12" fill="#000"/>
<rect x="1003" y="399" width="1" height="4" fill="#ff3232"/>
<rect x="1002" y="382" width="3" height="17" fill="#ff3232"/>
<rect x="1003" y="383" width="1" height="15" fill="#000"/>
<rect x="1008" y="326" width="1" height="41" fill="#54ffff"/>
<rect x="1007" y="332" width="3" height="29" fill="#54ffff"/>
<rect x="1012" y="343" width="1" height="14" fill="#ff3232"/>
<rect x="1011" y="357" width="3" height="18" fill="#ff3232"/>
<rect x="1012" y="358" width="1" height="16" fill="#000"/>
<rect x="1017" y="363" width="1" height="15" fill="#54ffff"/>
<rect x="1016" y="370" width="3" height="4" fill="#54ffff"/>
<rect x="1021" y="365" width="1" height="21" fill="#54ffff"/>
<rect x="1020" y="370" width="3" height="10" fill="#54ffff"/>
<rect x="1026" y="361" width="1" height="21" fill="#54ffff"/>
<rect x="1025" y="376" width="3" height="2" fill="#54ffff"/>
<rect x="1031" y="381" width="1" height="4" fill="#ff3232"/>
<rect x="1031" y="386" width="1" height="7" fill="#ff3232"/>
<rect x="1030" y="385" width="3" height="1" fill="#ff3232"/>
<rect x="1035" y="373" width="1" height="1" fill="#ff3232"/>
<rect x="1035" y="387" width="1" height="5" fill="#ff3232"/>
<rect x="1034" y="374" width="3" height="13" fill="#ff3232"/>
<rect x="1035" y="375" width="1" height="11" fill="#000"/>
<rect x="1040" y="369" width="1" height="15" fill="#54ffff"/>
<rect x="1039" y="378" width="3" height="2" fill="#54ffff"/>
<rect x="1045" y="379" width="1" height="3" fill="#ff3232"/>
<rect x="1044" y="369" width="3" height="10" fill="#ff3232"/>
<rect x="1045" y="370" width="1" height="8" fill="#000"/>
<rect x="1049" y="365" width="1" height="11" fill="#54ffff"/>
<rect x="1048" y="370" width="3" height="2" fill="#54ffff"/>
<rect x="1054" y="369" width="1" height="3" fill="#ff3232"/>
<rect x="1054" y="379" width="1" height="13" fill="#ff3232"/>
<rect x="1053" y="372" width="3" height="7" fill="#ff3232"/>
<rect x="1054" y="373" width="1" height="5" fill="#000"/>
</g>
<g id="greens">
<rect x="2" y="532" width="1056" height="1" fill="#00ff00"/>
<rect x="2" y="562" width="1056" height="1" fill="#00ff00"/>
<rect x="2" y="570" width="1056" height="1" fill="#00ff00"/>
<rect x="2" y="607" width="1056" height="1" fill="#00ff00"/>
<rect x="408" y="384" width="650" height="1" fill="#00ff00"/>
<rect x="408" y="407" width="650" height="1" fill="#00ff00"/>
<rect x="500" y="393" width="558" height="1" fill="#00ff00"/>
<rect x="500" y="399" width="558" height="1" fill="#00ff00"/>
</g>
<polyline points="2,427 6.5,427 11.5,427 16.5,427 20.5,427 25.5,427 29.5,427 34.5,427 39.5,427 43.5,376 48.5,376 53.5,376 57.5,376 62.5,376 66.5,376 71.5,376 76.5,376 80.5,376 85.5,376 89.5,376 94.5,376 99.5,376 103.5,330 108.5,330 113.5,330 117.5,330 122.5,330 126.5,330 131.5,330 136.5,330 140.5,289 145.5,289 149.5,289 154.5,289 159.5,289 163.5,289 168.5,289 173.5,289 177.5,289 182.5,289 186.5,289 191.5,281 196.5,281 200.5,281 205.5,281 209.5,281 214.5,281 219.5,281 223.5,281 228.5,281 232.5,307 237.5,307 242.5,307 246.5,307 251.5,307 256.5,307 260.5,307 265.5,307 269.5,307 274.5,304 279.5,304 283.5,304 288.5,304 292.5,304 297.5,304 302.5,304 306.5,304 311.5,304 316.5,304 320.5,304 325.5,304 329.5,304 334.5,304 339.5,304 343.5,304 348.5,304 352.5,304 357.5,304 362.5,304 366.5,304 371.5,304 376.5,304 380.5,304 385.5,304 389.5,304 394.5,304 399.5,304 403.5,304 408.5,304 412.5,304 417.5,304 422.5,304 426.5,346 431.5,356 435.5,356 440.5,356 445.5,356 449.5,356 454.5,356 459.5,356 463.5,356 468.5,356 472.5,356 477.5,356 482.5,356 486.5,356 491.5,356 495.5,356 500.5,356 505.5,356 509.5,356 514.5,356 519.5,348 523.5,348 528.5,348 532.5,348 537.5,348 542.5,348 546.5,348 551.5,348 555.5,348 560.5,348 565.5,348 569.5,348 574.5,348 579.5,348 583.5,348 588.5,348 592.5,348 597.5,348 602.5,348 606.5,348 611.5,348 615.5,348 620.5,348 625.5,351 629.5,351 634.5,351 639.5,351 643.5,351 648.5,351 652.5,351 657.5,351 662.5,351 666.5,351 671.5,351 675.5,351 680.5,351 685.5,351 689.5,351 694.5,351 698.5,351 703.5,351 708.5,369 712.5,369 717.5,369 722.5,369 726.5,369 731.5,369 735.5,369 740.5,369 745.5,369 749.5,369 754.5,369 758.5,367 763.5,367 768.5,367 772.5,367 777.5,367 782.5,367 786.5,367 791.5,378 795.5,378 800.5,378 805.5,378 809.5,378 814.5,378 818.5,382 823.5,382 828.5,382 832.5,382 837.5,382 842.5,382 846.5,382 851.5,382 855.5,382 860.5,382 865.5,376 869.5,376 874.5,371 878.5,371 883.5,371 888.5,371 892.5,371 897.5,371 901.5,371 906.5,371 911.5,371 915.5,371 920.5,371 925.5,371 929.5,371 934.5,368 938.5,368 943.5,368 948.5,368 952.5,368 957.5,368 961.5,368 966.5,368 971.5,368 975.5,368 980.5,368 985.5,368 989.5,368 994.5,368 998.5,368 1003.5,368 1008.5,368 1012.5,368 1017.5,368 1021.5,368 1026.5,368 1031.5,368 1035.5,368 1040.5,368 1045.5,368 1049.5,368 1054.5,368 1059,368" fill="none" stroke="#ff00ff" stroke-width="2" stroke-linejoin="miter"/>
<rect x="1057" y="372" width="2" height="1" fill="#ffffff"/>
<g stroke="#c0c0c0" stroke-width="1" fill="none" shape-rendering="auto">
<path d="M440.5 43.5 V39.5 H444.5 M441 41.5 L452 44.5 M441 43 L443 45"/>
<path d="M666.5 434.5 H678 M670 431.5 L666.5 434.5 L670 437.5"/>
</g>
<text x="454" y="50" fill="#c0c0c0" font-size="12" text-anchor="start">8.17</text>
<text x="679.5" y="440" fill="#c0c0c0" font-size="12" text-anchor="start">6.12</text>
<g id="raxis">
<rect x="1075" y="19" width="1" height="581" fill="#c00000"/>
<rect x="1126" y="0" width="1" height="600" fill="#c00000"/>
<rect x="1075" y="73" width="6" height="1" fill="#c00000"/>
<text x="1120.4" y="78" fill="#ff3232" font-size="12" text-anchor="end">8.00</text>
<rect x="1075" y="111" width="6" height="1" fill="#c00000"/>
<text x="1120.4" y="116" fill="#ff3232" font-size="12" text-anchor="end">7.80</text>
<rect x="1075" y="149" width="6" height="1" fill="#c00000"/>
<text x="1120.4" y="154" fill="#ff3232" font-size="12" text-anchor="end">7.60</text>
<rect x="1075" y="188" width="6" height="1" fill="#c00000"/>
<text x="1120.4" y="193" fill="#ff3232" font-size="12" text-anchor="end">7.40</text>
<rect x="1075" y="226" width="6" height="1" fill="#c00000"/>
<text x="1120.4" y="231" fill="#ff3232" font-size="12" text-anchor="end">7.20</text>
<rect x="1075" y="265" width="6" height="1" fill="#c00000"/>
<text x="1120.4" y="270" fill="#ff3232" font-size="12" text-anchor="end">7.00</text>
<rect x="1075" y="303" width="6" height="1" fill="#c00000"/>
<text x="1120.4" y="308" fill="#ff3232" font-size="12" text-anchor="end">6.80</text>
<rect x="1075" y="342" width="6" height="1" fill="#c00000"/>
<text x="1120.4" y="347" fill="#ff3232" font-size="12" text-anchor="end">6.60</text>
<rect x="1075" y="380" width="6" height="1" fill="#c00000"/>
<text x="1120.4" y="385" fill="#ff3232" font-size="12" text-anchor="end">6.40</text>
<rect x="1075" y="418" width="6" height="1" fill="#c00000"/>
<text x="1120.4" y="423" fill="#ff3232" font-size="12" text-anchor="end">6.20</text>
<rect x="1075" y="457" width="6" height="1" fill="#c00000"/>
<text x="1120.4" y="462" fill="#ff3232" font-size="12" text-anchor="end">6.00</text>
<rect x="1075" y="495" width="6" height="1" fill="#c00000"/>
<text x="1120.4" y="500" fill="#ff3232" font-size="12" text-anchor="end">5.80</text>
<rect x="1075" y="534" width="6" height="1" fill="#c00000"/>
<text x="1120.4" y="539" fill="#ff3232" font-size="12" text-anchor="end">5.60</text>
<rect x="1075" y="572" width="6" height="1" fill="#c00000"/>
<text x="1120.4" y="577" fill="#ff3232" font-size="12" text-anchor="end">5.40</text>
<rect x="1075" y="92" width="4" height="1" fill="#c00000"/>
<rect x="1075" y="130" width="4" height="1" fill="#c00000"/>
<rect x="1075" y="168" width="4" height="1" fill="#c00000"/>
<rect x="1075" y="207" width="4" height="1" fill="#c00000"/>
<rect x="1075" y="245" width="4" height="1" fill="#c00000"/>
<rect x="1075" y="284" width="4" height="1" fill="#c00000"/>
<rect x="1075" y="322" width="4" height="1" fill="#c00000"/>
<rect x="1075" y="361" width="4" height="1" fill="#c00000"/>
<rect x="1075" y="399" width="4" height="1" fill="#c00000"/>
<rect x="1075" y="437" width="4" height="1" fill="#c00000"/>
<rect x="1075" y="476" width="4" height="1" fill="#c00000"/>
<rect x="1075" y="514" width="4" height="1" fill="#c00000"/>
<rect x="1075" y="553" width="4" height="1" fill="#c00000"/>
<rect x="1075" y="591" width="4" height="1" fill="#c00000"/>
<rect x="1075" y="502" width="52" height="17" fill="#c00000"/>
<rect x="1076" y="503" width="50" height="15" fill="#000080"/>
<text x="1076.3" y="514" fill="#e0e0d0" font-size="12" text-anchor="start">5.68</text>
<rect x="1127" y="25" width="3" height="1" fill="#c00000"/>
<rect x="1127" y="45" width="3" height="1" fill="#c00000"/>
<rect x="1127" y="142" width="3" height="1" fill="#c00000"/>
<rect x="1127" y="239" width="3" height="1" fill="#c00000"/>
<rect x="1127" y="336" width="3" height="1" fill="#c00000"/>
<rect x="1127" y="433" width="3" height="1" fill="#c00000"/>
<rect x="1127" y="530" width="3" height="1" fill="#c00000"/>
<rect x="1129" y="59" width="1" height="1" fill="#b0b0b0"/>
<rect x="1129" y="78" width="1" height="1" fill="#b0b0b0"/>
<rect x="1129" y="97" width="1" height="1" fill="#b0b0b0"/>
<rect x="1129" y="116" width="1" height="1" fill="#b0b0b0"/>
<rect x="1129" y="135" width="1" height="1" fill="#b0b0b0"/>
<rect x="1129" y="154" width="1" height="1" fill="#b0b0b0"/>
<rect x="1129" y="160" width="1" height="1" fill="#b0b0b0"/>
<rect x="1129" y="174" width="1" height="1" fill="#b0b0b0"/>
<rect x="1129" y="180" width="1" height="1" fill="#b0b0b0"/>
<rect x="1129" y="193" width="1" height="1" fill="#b0b0b0"/>
<rect x="1129" y="199" width="1" height="1" fill="#b0b0b0"/>
<rect x="1129" y="212" width="1" height="1" fill="#b0b0b0"/>
<rect x="1129" y="218" width="1" height="1" fill="#b0b0b0"/>
<rect x="1129" y="231" width="1" height="1" fill="#b0b0b0"/>
<rect x="1129" y="237" width="1" height="1" fill="#b0b0b0"/>
<rect x="1129" y="250" width="1" height="1" fill="#b0b0b0"/>
<rect x="1129" y="256" width="1" height="1" fill="#b0b0b0"/>
<rect x="1129" y="269" width="1" height="1" fill="#b0b0b0"/>
<rect x="1129" y="275" width="1" height="1" fill="#b0b0b0"/>
<rect x="1129" y="288" width="1" height="1" fill="#b0b0b0"/>
<rect x="1129" y="294" width="1" height="1" fill="#b0b0b0"/>
<rect x="1129" y="307" width="1" height="1" fill="#b0b0b0"/>
<rect x="1129" y="313" width="1" height="1" fill="#b0b0b0"/>
<rect x="1129" y="326" width="1" height="1" fill="#b0b0b0"/>
<rect x="1129" y="332" width="1" height="1" fill="#b0b0b0"/>
<rect x="1129" y="346" width="1" height="1" fill="#b0b0b0"/>
<rect x="1129" y="352" width="1" height="1" fill="#b0b0b0"/>
<rect x="1129" y="365" width="1" height="1" fill="#b0b0b0"/>
<rect x="1129" y="371" width="1" height="1" fill="#b0b0b0"/>
<rect x="1129" y="384" width="1" height="1" fill="#b0b0b0"/>
<rect x="1129" y="390" width="1" height="1" fill="#b0b0b0"/>
<rect x="1129" y="403" width="1" height="1" fill="#b0b0b0"/>
<rect x="1129" y="409" width="1" height="1" fill="#b0b0b0"/>
<rect x="1129" y="422" width="1" height="1" fill="#b0b0b0"/>
<rect x="1129" y="428" width="1" height="1" fill="#b0b0b0"/>
<rect x="1129" y="441" width="1" height="1" fill="#b0b0b0"/>
<rect x="1129" y="447" width="1" height="1" fill="#b0b0b0"/>
<rect x="1129" y="460" width="1" height="1" fill="#b0b0b0"/>
<rect x="1129" y="466" width="1" height="1" fill="#b0b0b0"/>
<rect x="1129" y="479" width="1" height="1" fill="#b0b0b0"/>
<rect x="1129" y="485" width="1" height="1" fill="#b0b0b0"/>
<rect x="1129" y="498" width="1" height="1" fill="#b0b0b0"/>
<rect x="1129" y="504" width="1" height="1" fill="#b0b0b0"/>
<rect x="1129" y="517" width="1" height="1" fill="#b0b0b0"/>
<rect x="1129" y="523" width="1" height="1" fill="#b0b0b0"/>
<rect x="1129" y="536" width="1" height="1" fill="#b0b0b0"/>
<rect x="1129" y="542" width="1" height="1" fill="#b0b0b0"/>
<rect x="1129" y="556" width="1" height="1" fill="#b0b0b0"/>
<rect x="1129" y="562" width="1" height="1" fill="#b0b0b0"/>
<rect x="1129" y="575" width="1" height="1" fill="#b0b0b0"/>
<rect x="1129" y="581" width="1" height="1" fill="#b0b0b0"/>
<rect x="1129" y="594" width="1" height="1" fill="#b0b0b0"/>
<rect x="1129" y="31" width="1" height="1" fill="#b0b0b0"/>
<rect x="1129" y="33" width="1" height="1" fill="#b0b0b0"/>
<rect x="1129" y="35" width="1" height="1" fill="#b0b0b0"/>
<rect x="1129" y="37" width="1" height="1" fill="#b0b0b0"/>
</g>
<g id="top">
<rect x="0" y="19" width="1127" height="1" fill="#c00000"/>
<rect x="0" y="0" width="1" height="19" fill="#c00000"/>
<rect x="23" y="0" width="1" height="19" fill="#c00000"/>
<rect x="810" y="0" width="1" height="19" fill="#c00000"/>
<rect x="844" y="0" width="1" height="19" fill="#c00000"/>
<rect x="879" y="0" width="1" height="19" fill="#c00000"/>
<rect x="914" y="0" width="1" height="19" fill="#c00000"/>
<rect x="949" y="0" width="1" height="19" fill="#c00000"/>
<rect x="984" y="0" width="1" height="19" fill="#c00000"/>
<rect x="1019" y="0" width="1" height="19" fill="#c00000"/>
<rect x="1054" y="0" width="1" height="19" fill="#c00000"/>
<rect x="1089" y="0" width="1" height="19" fill="#c00000"/>
<rect x="5.5" y="3.5" width="11" height="9" rx="2" fill="none" stroke="#909090" shape-rendering="auto"/>
<rect x="11.5" y="5" width="4.5" height="7" fill="#909090"/>
<text x="28" y="14" fill="#c0c0c0" font-size="12" text-anchor="start">分时</text>
<text x="61" y="14" fill="#c0c0c0" font-size="12" text-anchor="start">1分钟</text>
<text x="99" y="14" fill="#c0c0c0" font-size="12" text-anchor="start">5分钟</text>
<text x="139" y="14" fill="#c0c0c0" font-size="12" text-anchor="start">15分钟</text>
<text x="185" y="14" fill="#c0c0c0" font-size="12" text-anchor="start">30分钟</text>
<text x="231" y="14" fill="#c0c0c0" font-size="12" text-anchor="start">60分钟</text>
<text x="312" y="14" fill="#c0c0c0" font-size="12" text-anchor="start">周线</text>
<text x="345" y="14" fill="#c0c0c0" font-size="12" text-anchor="start">月线</text>
<text x="378" y="14" fill="#c0c0c0" font-size="12" text-anchor="start">多周期</text>
<text x="422" y="14" fill="#c0c0c0" font-size="12" text-anchor="start">更多</text>
<text x="277" y="14" fill="#54ffff" font-size="12" text-anchor="start">日线</text>
<path d="M451 4 L455.5 8.5 L451 13" stroke="#c0c0c0" fill="none" shape-rendering="auto"/>
<text x="827.5" y="14" fill="#c0c0c0" font-size="12" text-anchor="middle">复权</text>
<text x="862" y="14" fill="#c0c0c0" font-size="12" text-anchor="middle">叠加</text>
<text x="897" y="14" fill="#c0c0c0" font-size="12" text-anchor="middle">多股</text>
<text x="932" y="14" fill="#c0c0c0" font-size="12" text-anchor="middle">统计</text>
<text x="967" y="14" fill="#c0c0c0" font-size="12" text-anchor="middle">画线</text>
<text x="1002" y="14" fill="#c0c0c0" font-size="12" text-anchor="middle">F10</text>
<text x="1037" y="14" fill="#c0c0c0" font-size="12" text-anchor="middle">标记</text>
<text x="1072" y="14" fill="#c0c0c0" font-size="12" text-anchor="middle">+自选</text>
<text x="1107" y="14" fill="#c0c0c0" font-size="12" text-anchor="middle">返回</text>
<text x="2.5" y="33.3" fill="#c0c0c0" font-size="12" text-anchor="start" letter-spacing="0.1">农发种业(日线.前复权)</text>
<circle cx="134.5" cy="29" r="6" fill="#707070" shape-rendering="auto"/>
<path d="M131 27.5 L134.5 31 L138 27.5" stroke="#e8e8e8" stroke-width="1.3" fill="none" shape-rendering="auto"/>
<text x="144" y="33" fill="#ff00ff" font-size="11.6" text-anchor="start">MA5: 6.46</text>
<text x="202.5" y="33" fill="#00ff00" font-size="11.6" text-anchor="start">MA10: 6.30</text>
<text x="266.5" y="33" fill="#00ff00" font-size="11.6" text-anchor="start">MA20: 6.26</text>
<text x="332" y="33" fill="#00ff00" font-size="11.6" text-anchor="start">MA60: 5.22</text>
<text x="397" y="33" fill="#00ff00" font-size="11.6" text-anchor="start">MA120: 5.45</text>
<text x="468.5" y="33" fill="#00ff00" font-size="11.6" text-anchor="start">MA250: 6.33</text>
<path d="M1047.5 24.5 L1052.5 29.5 L1047.5 34.5 L1042.5 29.5 Z" stroke="#a0a0a0" fill="none" shape-rendering="auto"/>
<rect x="1060.5" y="24.5" width="11" height="10" rx="2" fill="none" stroke="#909090" shape-rendering="auto"/>
<rect x="1066.5" y="26.5" width="4" height="6.5" fill="#909090"/>
</g>
<g id="baxis">
<rect x="0" y="630" width="978" height="1" fill="#c00000"/>
<rect x="0" y="646" width="978" height="1" fill="#c00000"/>
<rect x="52" y="630" width="1" height="16" fill="#c00000"/>
<rect x="153" y="630" width="1" height="16" fill="#c00000"/>
<rect x="236" y="630" width="1" height="16" fill="#c00000"/>
<rect x="319" y="630" width="1" height="16" fill="#c00000"/>
<rect x="416" y="630" width="1" height="16" fill="#c00000"/>
<rect x="513" y="630" width="1" height="16" fill="#c00000"/>
<rect x="693" y="630" width="1" height="16" fill="#c00000"/>
<rect x="799" y="630" width="1" height="16" fill="#c00000"/>
<rect x="896" y="630" width="1" height="16" fill="#c00000"/>
<rect x="77" y="630" width="1" height="3" fill="#c00000"/>
<rect x="103" y="630" width="1" height="3" fill="#c00000"/>
<rect x="128" y="630" width="1" height="3" fill="#c00000"/>
<rect x="174" y="630" width="1" height="3" fill="#c00000"/>
<rect x="195" y="630" width="1" height="3" fill="#c00000"/>
<rect x="215" y="630" width="1" height="3" fill="#c00000"/>
<rect x="257" y="630" width="1" height="3" fill="#c00000"/>
<rect x="278" y="630" width="1" height="3" fill="#c00000"/>
<rect x="298" y="630" width="1" height="3" fill="#c00000"/>
<rect x="343" y="630" width="1" height="3" fill="#c00000"/>
<rect x="368" y="630" width="1" height="3" fill="#c00000"/>
<rect x="392" y="630" width="1" height="3" fill="#c00000"/>
<rect x="440" y="630" width="1" height="3" fill="#c00000"/>
<rect x="465" y="630" width="1" height="3" fill="#c00000"/>
<rect x="489" y="630" width="1" height="3" fill="#c00000"/>
<rect x="535" y="630" width="1" height="3" fill="#c00000"/>
<rect x="624" y="630" width="1" height="3" fill="#c00000"/>
<rect x="647" y="630" width="1" height="3" fill="#c00000"/>
<rect x="670" y="630" width="1" height="3" fill="#c00000"/>
<rect x="720" y="630" width="1" height="3" fill="#c00000"/>
<rect x="746" y="630" width="1" height="3" fill="#c00000"/>
<rect x="773" y="630" width="1" height="3" fill="#c00000"/>
<rect x="823" y="630" width="1" height="3" fill="#c00000"/>
<rect x="848" y="630" width="1" height="3" fill="#c00000"/>
<rect x="872" y="630" width="1" height="3" fill="#c00000"/>
<rect x="921" y="630" width="1" height="3" fill="#c00000"/>
<rect x="947" y="630" width="1" height="3" fill="#c00000"/>
<rect x="972" y="630" width="1" height="3" fill="#c00000"/>
<rect x="42" y="646" width="1" height="4" fill="#c00000"/>
<rect x="73" y="646" width="1" height="4" fill="#c00000"/>
<rect x="115" y="646" width="1" height="4" fill="#c00000"/>
<rect x="144" y="646" width="1" height="4" fill="#c00000"/>
<rect x="177" y="646" width="1" height="4" fill="#c00000"/>
<rect x="207" y="646" width="1" height="4" fill="#c00000"/>
<rect x="241" y="646" width="1" height="4" fill="#c00000"/>
<rect x="282" y="646" width="1" height="4" fill="#c00000"/>
<rect x="308" y="646" width="1" height="4" fill="#c00000"/>
<rect x="332" y="646" width="1" height="4" fill="#c00000"/>
<rect x="364" y="646" width="1" height="4" fill="#c00000"/>
<rect x="390" y="646" width="1" height="4" fill="#c00000"/>
<rect x="422" y="646" width="1" height="4" fill="#c00000"/>
<rect x="480" y="646" width="1" height="4" fill="#c00000"/>
<rect x="508" y="646" width="1" height="4" fill="#c00000"/>
<rect x="537" y="646" width="1" height="4" fill="#c00000"/>
<rect x="568" y="646" width="1" height="4" fill="#c00000"/>
<rect x="599" y="646" width="1" height="4" fill="#c00000"/>
<rect x="628" y="646" width="1" height="4" fill="#c00000"/>
<rect x="663" y="646" width="1" height="4" fill="#c00000"/>
<rect x="696" y="646" width="1" height="4" fill="#c00000"/>
<rect x="735" y="646" width="1" height="4" fill="#c00000"/>
<rect x="766" y="646" width="1" height="4" fill="#c00000"/>
<rect x="807" y="646" width="1" height="4" fill="#c00000"/>
<rect x="839" y="646" width="1" height="4" fill="#c00000"/>
<rect x="871" y="646" width="1" height="4" fill="#c00000"/>
<text x="2" y="643.3" fill="#ff3232" font-size="12" text-anchor="start">2024年</text>
<text x="53.3" y="643.2" fill="#ff3232" font-size="12" text-anchor="start">12</text>
<text x="154.3" y="643.2" fill="#ff3232" font-size="12" text-anchor="start">1</text>
<text x="237.3" y="643.2" fill="#ff3232" font-size="12" text-anchor="start">2</text>
<text x="320.3" y="643.2" fill="#ff3232" font-size="12" text-anchor="start">3</text>
<text x="417.3" y="643.2" fill="#ff3232" font-size="12" text-anchor="start">4</text>
<text x="514.3" y="643.2" fill="#ff3232" font-size="12" text-anchor="start">5</text>
<text x="694.3" y="643.2" fill="#ff3232" font-size="12" text-anchor="start">7</text>
<text x="800.3" y="643.2" fill="#ff3232" font-size="12" text-anchor="start">8</text>
<text x="897.3" y="643.2" fill="#ff3232" font-size="12" text-anchor="start">9</text>
<rect x="537" y="631" width="79" height="15" fill="#c00000"/>
<rect x="538" y="631" width="77" height="15" fill="#000080"/>
<text x="539" y="642.3" fill="#e0e0e0" font-size="12" text-anchor="start">2025/05/13/二</text>
<rect x="428" y="616" width="13" height="13" fill="#8b4513"/>
<text x="428.5" y="627" fill="#ffffff" font-size="12" text-anchor="start">榜</text>
<rect x="867" y="616" width="13" height="13" fill="#143c78"/>
<text x="867.5" y="627" fill="#ffffff" font-size="12" text-anchor="start">财</text>
<rect x="9" y="648" width="1" height="2" fill="#d0d0d0"/>
<rect x="13" y="648" width="1" height="2" fill="#d0d0d0"/>
<rect x="17" y="648" width="1" height="2" fill="#d0d0d0"/>
<rect x="20" y="648" width="1" height="2" fill="#d0d0d0"/>
<rect x="51" y="648" width="1" height="2" fill="#d0d0d0"/>
<rect x="829" y="648" width="1" height="2" fill="#d0d0d0"/>
<rect x="845" y="648" width="4" height="2" fill="#54ffff"/>
<rect x="853" y="648" width="13" height="2" fill="#54ffff"/>
</g>
<rect x="978" y="600" width="152" height="50" fill="#000"/>
<g font-family='"Liberation Serif","Noto Serif CJK SC",serif' font-weight="bold" fill="#ffffff">
<text transform="translate(1050,625.9) scale(1.1,1)" x="0" y="0" font-size="18.4" text-anchor="middle" stroke="#ffffff" stroke-width="0.35">乐淘公式网</text>
<text x="1045.5" y="644.5" font-size="15" text-anchor="middle">www.60lt.com</text>
</g>
</svg>
</body></html>
